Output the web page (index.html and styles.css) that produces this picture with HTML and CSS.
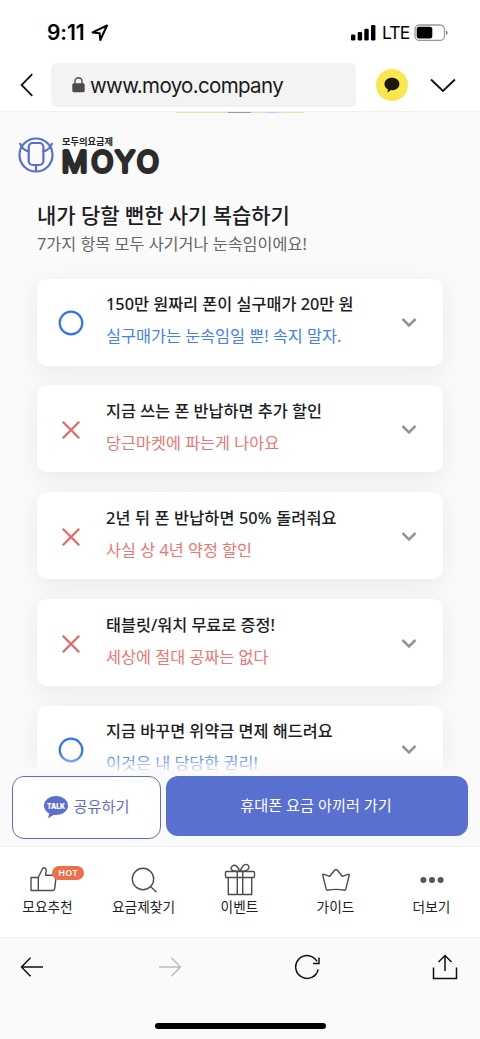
FILE: index.html
```html
<!DOCTYPE html>
<html lang="ko">
<head>
<meta charset="utf-8">
<meta name="viewport" content="width=device-width, initial-scale=1">
<title>MOYO</title>
<link rel="stylesheet" href="styles.css">
</head>
<body>
<svg class="defs" width="0" height="0" aria-hidden="true">
  <symbol id="circle" viewBox="0 0 26 26"><circle cx="13" cy="13" r="11.3" fill="none" stroke="#2f74f5" stroke-width="2.2"/></symbol>
  <symbol id="cross" viewBox="0 0 26 26"><path d="M4.8 4.8 21.2 21.2M21.2 4.8 4.8 21.2" fill="none" stroke="#ea6663" stroke-width="2.2"/></symbol>
  <symbol id="chevron" viewBox="0 0 16 12"><path d="M1.5 2 8 8.5 14.5 2" fill="none" stroke="#949494" stroke-width="2.5"/></symbol>
</svg>
<div class="phone">
  <header class="status">
    <span class="time">9:11</span>
    <svg class="locate" width="18" height="18" viewBox="0 0 18 18"><path d="M1.6 8.4 16 1.500 9.300 16 8.600 9.200Z" fill="none" stroke="#000" stroke-width="2" stroke-linejoin="round"/></svg>
    <svg class="signal" width="25" height="16" viewBox="0 0 25 16"><rect y="9.5" width="4.4" height="6" rx="1.3"/><rect x="6.7" y="7" width="4.4" height="8.5" rx="1.3"/><rect x="13.3" y="3.7" width="4.4" height="11.8" rx="1.3"/><rect x="20" y="0" width="4.4" height="15.5" rx="1.3"/></svg>
    <span class="network">LTE</span>
    <svg class="battery" width="35" height="18" viewBox="0 0 35 18"><rect x="1" y="1" width="29.5" height="15.4" rx="4.5" fill="#fff" stroke="#999" stroke-width="1.3"/><rect x="2.7" y="2.8" width="15.6" height="11.8" rx="2.5"/><path d="M32 6.3Q33.7 7 33.7 8.8T32 11.3Z" fill="#888"/></svg>
  </header>
  <div class="browser">
    <svg class="back" width="14" height="24" viewBox="0 0 14 24"><path d="M12.3 1.2 1.6 12 12.3 22.8" fill="none" stroke="#111" stroke-width="1.8"/></svg>
    <div class="address">
      <svg width="13" height="16" viewBox="0 0 13 16"><rect x=".3" y="6.3" width="12.4" height="9" rx="1.5" fill="#4b4b4b"/><path d="M3 7V4.3a3.5 3.5 0 0 1 7 0V7" fill="none" stroke="#4b4b4b" stroke-width="1.4"/></svg>
      <span class="url">www.moyo.company</span>
    </div>
    <svg class="kakao" width="32" height="32" viewBox="0 0 32 32"><circle cx="16" cy="16" r="16" fill="#fae64d"/><path d="M16 8.7c-4.2 0-7.5 2.7-7.5 6.2 0 2.4 1.3 4.4 3.5 5.4l-.6 3.1 3.6-2.3 1 .1c4.200 0 7.500-2.800 7.500-6.300S20.200 8.700 16 8.700Z" fill="#1c1a06"/></svg>
    <svg width="26" height="15" viewBox="0 0 26 15"><path d="M1 1.500 13 13 25 1.500" fill="none" stroke="#111" stroke-width="1.900"/></svg>
  </div>
  <main class="page">
    <div class="strip"><i class="sand long"></i><i class="gray"></i><i class="sand"></i><i class="sky"></i><i class="sand end"></i></div>
    <div class="logo">
      <svg width="36" height="36" viewBox="0 0 36 36" fill="none" stroke="#566dd4" stroke-width="2.200" stroke-linecap="round"><circle cx="18" cy="18" r="16.500"/><rect x="10.700" y="6" width="14.700" height="22" rx="4"/><path d="M2.200 6.800Q4.500 12.500 10.500 14.500M33.800 6.800Q31.500 12.500 25.500 14.500M18 28v6"/></svg>
      <svg class="wordmark" width="102" height="42" viewBox="0 0 102 42"><text class="tagline" x="2" y="8.800" textLength="51" lengthAdjust="spacingAndGlyphs">모두의요금제</text><text class="moyo" x="1.700 31.500 55.600 77" y="36.200">MOYO</text></svg>
    </div>
    <h1>내가 당할 뻔한 사기 복습하기</h1>
    <p class="lead">7가지 항목 모두 사기거나 눈속임이에요!</p>
    <section class="cards">
      <article class="card yes"><svg class="mark"><use href="#circle"/></svg><div class="copy"><h2>150만 원짜리 폰이 실구매가 20만 원</h2><p>실구매가는 눈속임일 뿐! 속지 말자.</p></div><svg class="chev"><use href="#chevron"/></svg></article>
      <article class="card no"><svg class="mark"><use href="#cross"/></svg><div class="copy"><h2>지금 쓰는 폰 반납하면 추가 할인</h2><p>당근마켓에 파는게 나아요</p></div><svg class="chev"><use href="#chevron"/></svg></article>
      <article class="card no"><svg class="mark"><use href="#cross"/></svg><div class="copy"><h2 class="loose">2년 뒤 폰 반납하면 50% 돌려줘요</h2><p>사실 상 4년 약정 할인</p></div><svg class="chev"><use href="#chevron"/></svg></article>
      <article class="card no"><svg class="mark"><use href="#cross"/></svg><div class="copy"><h2>태블릿/워치 무료로 증정!</h2><p>세상에 절대 공짜는 없다</p></div><svg class="chev"><use href="#chevron"/></svg></article>
      <article class="card yes"><svg class="mark"><use href="#circle"/></svg><div class="copy"><h2>지금 바꾸면 위약금 면제 해드려요</h2><p>이것은 내 당당한 권리!</p></div><svg class="chev"><use href="#chevron"/></svg></article>
    </section>
    <div class="actions">
      <div class="share"><svg width="26" height="24" viewBox="0 0 26 24"><path d="M13 1C6.300 1 1 5.300 1 10.600c0 3.400 2.100 6.300 5.300 8L5 23.300l5.500-3.400 2.500.2c6.700 0 12-4.200 12-9.500S19.700 1 13 1Z" fill="#5a6fcf"/><text class="talk" x="4" y="13.600" textLength="18" lengthAdjust="spacingAndGlyphs">TALK</text></svg><span>공유하기</span></div>
      <div class="go">휴대폰 요금 아끼러 가기</div>
    </div>
  </main>
  <nav class="tabs">
    <div class="tab"><div class="pic"><svg width="30" height="28" viewBox="0 0 30 28"><path d="M2 11.500h7.300v13H2zM9.300 11.500 13.500 2.800q1-1.500 2.500-.7 1.700 1 1.200 3l-.6 4.200h8.400q2.200 0 2 2.400l-1.300 11q-.2 1.800-1.700 1.800H9.300"/></svg><b class="hot">HOT</b></div><span>모요추천</span></div>
    <div class="tab"><div class="pic"><svg width="28" height="28" viewBox="0 0 28 28"><circle cx="13" cy="13" r="10.700"/><path d="m20.500 20.600 6 5.700"/></svg></div><span>요금제찾기</span></div>
    <div class="tab"><div class="pic"><svg width="32" height="34" viewBox="0 0 32 34"><rect x="1.500" y="8.500" width="29" height="6" rx="1"/><path d="M4.300 14.500v17h23.400v-17M13.300 8.500v23M18.700 8.500v23M15.500 8.200C6 9 6 5 8.500 3s6 .5 7 5.200ZM16.500 8.200C17.500 3.500 21 0 23.700 2s1 6.500-7.200 6.200Z"/></svg></div><span>이벤트</span></div>
    <div class="tab"><div class="pic"><svg width="30" height="26" viewBox="0 0 30 26"><path d="M5.300 22.300 1.800 8.500q-.3-1.700 1.200-1.200l5.800 2 5-6.300q1.200-1.200 2.400 0l5 6.300 5.800-2q1.500-.5 1.200 1.200l-3.500 13.800q-.3 1-1.200.9Q15 21.500 6.500 23.200q-1 .1-1.200-.9Z"/></svg></div><span>가이드</span></div>
    <div class="tab"><div class="pic"><svg class="dots" width="24" height="8" viewBox="0 0 24 8"><circle cx="3.400" cy="4" r="3"/><circle cx="12" cy="4" r="3"/><circle cx="20.600" cy="4" r="3"/></svg></div><span>더보기</span></div>
  </nav>
  <footer class="toolbar">
    <div class="tools">
      <svg width="24" height="20" viewBox="0 0 24 20"><path d="M10.500.7 1.500 10l9 9.300M1.500 10H23"/></svg>
      <svg class="off" width="24" height="20" viewBox="0 0 24 20"><path d="m13.500.7 9 9.300-9 9.300M22.500 10H1"/></svg>
      <svg class="reload" width="27" height="26" viewBox="0 0 27 26"><path d="M24.200 15.500A11.400 11.400 0 1 1 23 7.300M25 3.500v6h-6"/></svg>
      <svg width="26" height="26" viewBox="0 0 26 26"><path d="M1.500 13.500v11h23v-11M13 17V2M6.500 8 13 1.500 19.500 8"/></svg>
    </div>
    <div class="home"></div>
  </footer>
</div>
</body>
</html>
```
FILE: styles.css
```css
* { box-sizing: border-box; }
body { margin: 0; background: #fff; font-family: "Noto Sans", "Noto Sans CJK KR", sans-serif; color: #1b1e24; }
h1, h2, p { margin: 0; }
.defs { display: block; }
.phone { width: 480px; height: 1039px; display: flex; flex-direction: column; overflow: hidden; }
.status { height: 63px; flex: none; display: flex; align-items: center; padding: 2px 31px 0 47px; font-family: Inter, sans-serif; color: #000; }
.time { font-size: 21px; font-weight: 600; width: 44px; letter-spacing: -.1px; white-space: nowrap; }
.signal { margin-left: auto; }
.network { font-size: 17.500px; width: 25px; margin: 0 7px 0 6px; letter-spacing: -.9px; }
.browser { height: 48px; flex: none; display: flex; align-items: center; padding: 0 24px 4px 20px; }
.address { width: 306px; height: 44px; margin: 0 20px 0 17px; padding-left: 21px; border-radius: 6px; background: #f3f3f3; display: flex; align-items: center; gap: 5px; }
.url { font: 20.500px Inter, sans-serif; color: #1a1a1a; letter-spacing: -.65px; }
.kakao { margin-right: 22px; }
.page { position: relative; height: 735px; flex: none; overflow: hidden; background: #fafafa; border-top: 1px solid #f0f0f0; }
.strip { display: flex; height: 1px; margin-left: 176px; }
.strip i { width: 15px; background: #f8dba5; }
.strip .long { width: 52px; }
.strip .end { width: 26px; }
.strip .gray { width: 23px; background: #999; }
.strip .sky { width: 12px; background: #afd7f3; }
.logo { display: flex; height: 42px; margin: 23px 0 0 18px; align-items: flex-start; gap: 6px; }
.logo > svg:first-child { margin-top: 1px; }
.tagline { font: 700 9px "Noto Sans CJK KR", sans-serif; fill: #222; }
.moyo { font: 300 28.500px Inter, sans-serif; fill: #2b2b2b; stroke: #2b2b2b; stroke-width: 4; stroke-linejoin: round; }
h1 { margin: 20px 0 0 37px; font-size: 21px; font-weight: 500; line-height: 34px; letter-spacing: -.05px; white-space: nowrap; }
.lead { margin-left: 37px; font-size: 16.250px; line-height: 24px; color: #666; white-space: nowrap; }
.cards { display: flex; flex-direction: column; gap: 19.850px; padding: 22.500px 37px 0; }
.card { height: 87px; flex: none; display: flex; align-items: center; padding: 0 26px 0 21px; border-radius: 10px; background: #fff; box-shadow: 0 5px 24px rgba(0,0,0,.07); }
.mark { width: 26px; height: 26px; margin-top: 2px; flex: none; }
.copy { margin-left: 22px; flex: 1; padding-bottom: 4px; white-space: nowrap; }
.copy h2 { font-size: 16.300px; font-weight: 500; line-height: 32px; }
.copy .loose { letter-spacing: .15px; }
.copy p { font-size: 16.300px; line-height: 32px; }
.yes p { color: #4380f5; }
.no p { color: #ed7673; }
.chev { width: 16px; height: 12px; margin-top: 2px; flex: none; }
.actions { position: absolute; inset: auto 0 0; height: 92px; padding: 22px 12px 0; display: flex; gap: 5px; background: linear-gradient(rgba(250,250,250,0), #fafafa 20px); font-size: 15.200px; }
.share { width: 149px; height: 63px; border: 1.500px solid #5a6fcf; border-radius: 12px; background: #fff; color: #5a6fcf; display: flex; align-items: center; justify-content: center; gap: 5px; padding: 0 1px 2px 0; }
.share span { margin-top: -3px; }
.talk { font: 900 7.500px Inter, sans-serif; fill: #fff; }
.go { flex: 1; height: 60px; border-radius: 12px; background: #5a70d1; color: #fff; display: flex; align-items: center; justify-content: center; padding: 0 2px 5px 0; }
.tabs { height: 91px; flex: none; display: flex; background: #fff; border-top: 1px solid #f3f3f3; }
.tab { width: 96px; display: flex; flex-direction: column; align-items: center; padding-top: 16px; font-size: 13.700px; white-space: nowrap; }
.tab > span { line-height: 20px; margin-left: -1px; }
.pic { position: relative; height: 34px; display: flex; align-items: center; }
.pic svg { fill: none; stroke: #4c4c4c; stroke-width: 1.400; stroke-linejoin: round; }
.tab:first-child .pic svg { margin-right: 8px; }
.pic .dots { fill: #555; stroke: none; }
.hot { position: absolute; left: 23px; top: 3px; width: 32px; height: 14px; border-radius: 7px; background: #ed704a; color: #fff; font-size: 9px; line-height: 14px; font-weight: 600; text-align: center; letter-spacing: .3px; }
.toolbar { flex: 1; background: #fafafa; border-top: 1px solid #f3f3f3; }
.tools { display: flex; justify-content: space-between; align-items: center; height: 26px; margin: 16px 22px 0 20px; }
.tools svg { fill: none; stroke: #111; stroke-width: 1.500; }
.tools .off { stroke: #bdbdbd; margin-left: 3px; }
.tools .reload { margin-left: 1px; }
.home { width: 171px; height: 6px; margin: 43px auto 0; border-radius: 3px; background: #000; }
```
